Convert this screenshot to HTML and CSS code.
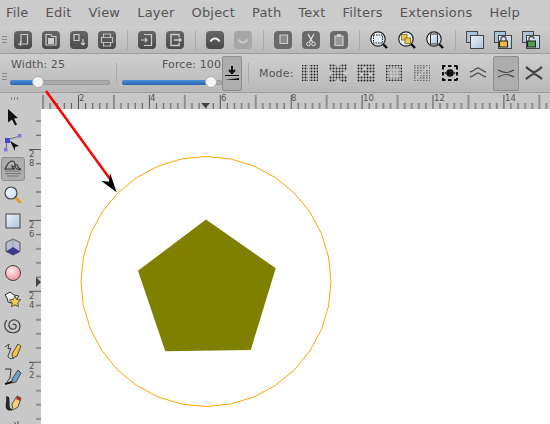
FILE: index.html
```html
<!DOCTYPE html>
<html lang="en">
<head>
    <meta charset="UTF-8">
    <title>Inkscape</title>
    <link rel="stylesheet" href="styles.css">
</head>
<body>
    <svg class="defs" width="0" height="0">
        <defs>
            <linearGradient id="btn" x1="0" y1="0" x2="0" y2="1">
                <stop offset="0" stop-color="#666"/>
                <stop offset="1" stop-color="#4a4a4a"/>
            </linearGradient>
            <linearGradient id="paper" x1="0" y1="0" x2="1" y2="1">
                <stop offset="0" stop-color="#eef3f8"/>
                <stop offset="1" stop-color="#a9c3dc"/>
            </linearGradient>
            <linearGradient id="lens" x1="0" y1="0" x2="1" y2="1">
                <stop offset="0" stop-color="#fff"/>
                <stop offset="1" stop-color="#c3d6e8"/>
            </linearGradient>
            <radialGradient id="ball" cx=".4" cy=".35" r=".7">
                <stop offset="0" stop-color="#fff0f2"/>
                <stop offset="1" stop-color="#f08a98"/>
            </radialGradient>
            <pattern id="dots" width="3" height="3" patternUnits="userSpaceOnUse">
                <circle cx="1.5" cy="1.5" r=".95" fill="#222"/>
            </pattern>
            <pattern id="fine" width="3" height="2.5" patternUnits="userSpaceOnUse">
                <rect x="1" y="1" width="1.6" height="1" fill="#444"/>
            </pattern>
            <pattern id="hticks" x="37" width="70.9" height="16" patternUnits="userSpaceOnUse">
                <path d="M.5 2V16M35.95 2V16M7.6 10V16M14.7 10V16M21.8 10V16M28.9 10V16M43 10V16M50.1 10V16M57.2 10V16M64.3 10V16" stroke="#555" fill="none"/>
            </pattern>
            <pattern id="vticks" y="40" width="12" height="70.9" patternUnits="userSpaceOnUse">
                <path d="M0 .5H12M7 14.7H12M7 28.9H12M7 43H12M7 57.2H12" stroke="#555" fill="none"/>
            </pattern>

            <symbol id="magnifier" viewBox="0 0 18 18">
                <path d="M12 12l5 5" stroke="#111" stroke-width="2.4"/>
                <circle cx="8" cy="8" r="7.2" fill="url(#lens)" stroke="#222" stroke-width="1.2"/>
            </symbol>
            <symbol id="panel" viewBox="0 0 18 18">
                <rect x=".5" y=".5" width="11" height="11" fill="#a8c3dc" stroke="#444"/>
                <rect x="4.5" y="4.5" width="13" height="13" fill="url(#paper)" stroke="#444"/>
            </symbol>
        </defs>
    </svg>

    <nav class="menubar">
        <span>File</span><span>Edit</span><span>View</span><span>Layer</span><span>Object</span><span>Path</span><span>Text</span><span>Filters</span><span>Extensions</span><span>Help</span>
    </nav>

    <div class="toolbar commands">
        <i class="grip"></i>
        <svg class="tool" viewBox="0 0 18 18"><rect width="18" height="18" rx="4" fill="url(#btn)"/><path d="M7 12V3.5h6.5V13H9M6.500 10v5M4 13h5" fill="none" stroke="#ccc" stroke-width="1.2"/></svg>
        <svg class="tool" viewBox="0 0 18 18"><rect width="18" height="18" rx="4" fill="url(#btn)"/><path d="M4 3.5h5l1 2h4V14H4z" fill="none" stroke="#ccc" stroke-width="1.2"/><rect x="6" y="7" width="6" height="6" fill="#ccc"/></svg>
        <svg class="tool" viewBox="0 0 18 18"><rect width="18" height="18" rx="4" fill="url(#btn)"/><path d="M4 3.5h5v6H4z" fill="none" stroke="#ccc" stroke-width="1.2"/><path d="M13 8v6M11 12l2 2 2-2" fill="none" stroke="#ccc" stroke-width="1.2"/></svg>
        <svg class="tool" viewBox="0 0 18 18"><rect width="18" height="18" rx="4" fill="url(#btn)"/><path d="M5.5 6V3h7v3M5.500 12v3h7v-3M3.500 6.500h11v5h-11z" fill="none" stroke="#bbb" stroke-width="1.2"/></svg>
        <i class="sep"></i>
        <svg class="tool" viewBox="0 0 18 18"><rect width="18" height="18" rx="4" fill="url(#btn)"/><path d="M6 3.5h7.5v11H6M3 9h6M7 7l2 2-2 2" fill="none" stroke="#ccc" stroke-width="1.2"/></svg>
        <svg class="tool" viewBox="0 0 18 18"><rect width="18" height="18" rx="4" fill="url(#btn)"/><path d="M13 6V3.5H5v11h8V12M8 9h7M13 7l2 2-2 2" fill="none" stroke="#ccc" stroke-width="1.4"/></svg>
        <i class="sep"></i>
        <svg class="tool" viewBox="0 0 18 18"><rect width="18" height="18" rx="4" fill="url(#btn)"/><path d="M4.5 10.500c2-4 7-4 9 0" fill="none" stroke="#eee" stroke-width="2"/></svg>
        <svg class="tool" viewBox="0 0 18 18"><rect width="18" height="18" rx="4" fill="#a6a6a6"/><path d="M4.5 8.500c2 4 7 4 9 0" fill="none" stroke="#c8c8c8" stroke-width="2"/></svg>
        <i class="sep"></i>
        <svg class="tool" viewBox="0 0 18 18"><rect width="18" height="18" rx="4" fill="#6a6a6a"/><path d="M6 4h7.500v8.500H6z" fill="#8a8a8a" stroke="#ccc" stroke-width="1.2"/></svg>
        <svg class="tool" viewBox="0 0 18 18"><rect width="18" height="18" rx="4" fill="#6a6a6a"/><path d="M6 3l4.500 8M12 3L7.500 11" stroke="#ddd" stroke-width="1.3"/><circle cx="6.500" cy="13" r="1.800" fill="none" stroke="#ddd"/><circle cx="11.500" cy="13" r="1.800" fill="none" stroke="#ddd"/></svg>
        <svg class="tool" viewBox="0 0 18 18"><rect width="18" height="18" rx="4" fill="#6a6a6a"/><path d="M5 5h8v9.500H5z" fill="#999" stroke="#ccc" stroke-width="1.2"/><rect x="7" y="3" width="4" height="3" fill="#ccc"/></svg>
        <i class="sep"></i>
        <svg class="tool" viewBox="0 0 18 18"><use href="#magnifier"/><rect x="3.500" y="4" width="9" height="8" fill="#e4ecf4" stroke="#222" stroke-dasharray="1.500 1"/></svg>
        <svg class="tool" viewBox="0 0 18 18"><use href="#magnifier"/><rect x="3.500" y="3.500" width="5.500" height="5.500" fill="#f2c84b" stroke="#7a6a22" stroke-width=".8"/><rect x="7" y="7" width="5.500" height="5.500" fill="#f2c84b" stroke="#7a6a22" stroke-width=".8"/></svg>
        <svg class="tool" viewBox="0 0 18 18"><use href="#magnifier"/><rect x="4.500" y="3" width="7" height="10" fill="url(#paper)" stroke="#333"/></svg>
        <i class="sep"></i>
        <svg class="tool" viewBox="0 0 18 18"><use href="#panel"/></svg>
        <svg class="tool" viewBox="0 0 18 18"><use href="#panel"/><path d="M7 10V8a2.500 2.500 0 0 1 5 0v2" fill="none" stroke="#555" stroke-width="1.3"/><rect x="5.500" y="10" width="8" height="6" fill="#f0b92e" stroke="#222"/></svg>
        <svg class="tool" viewBox="0 0 18 18"><use href="#panel"/><path d="M7 10V8a2.500 2.500 0 0 1 5 0" fill="none" stroke="#555" stroke-width="1.3"/><rect x="5.500" y="10" width="8" height="6" fill="#49a049" stroke="#222"/></svg>
    </div>

    <div class="toolbar controls">
        <i class="grip"></i>
        <label class="slider width-slider">
            <span class="slider-label">Width: 25</span>
            <span class="track"><span class="fill fill-width"></span><span class="thumb"></span></span>
        </label>
        <i class="sep"></i>
        <label class="slider force-slider">
            <span class="slider-label">Force: 100</span>
            <span class="track"><span class="fill fill-force"></span><span class="thumb"></span></span>
        </label>
        <button class="toggle pressure">
            <svg width="16" height="16" viewBox="0 0 16 16"><path d="M8 1v6M5 5l3 3 3-3" fill="none" stroke="#111" stroke-width="2"/><path d="M1 10h14v1H1zM1 15l14-2v2z" fill="#111"/></svg>
        </button>
        <i class="sep"></i>
        <span class="mode-label">Mode:</span>
        <div class="modes">
            <span class="mode"><svg width="18" height="18" viewBox="0 0 18 18"><rect x="1" y="1" width="16" height="16" fill="url(#dots)"/><rect x="7" y="1" width="1" height="16" fill="#ccc"/></svg></span>
            <span class="mode"><svg width="18" height="18" viewBox="0 0 18 18"><rect width="18" height="18" fill="url(#dots)"/><path d="M0 6l5 3-5 3zM18 6l-5 3 5 3zM6 0l3 4 3-4zM6 18l3-4 3 4z" fill="#c8c8c8"/></svg></span>
            <span class="mode"><svg width="18" height="18" viewBox="0 0 18 18"><rect width="18" height="18" fill="url(#dots)"/><path d="M6 3h3v3H6zM12 9h3v3h-3zM3 9h3v3H3z" fill="#c8c8c8"/></svg></span>
            <span class="mode"><svg width="18" height="18" viewBox="0 0 18 18"><rect x="1" y="1" width="16" height="16" fill="url(#dots)"/><rect x="4" y="4" width="10" height="10" fill="#c8c8c8" opacity=".75"/></svg></span>
            <span class="mode"><svg width="18" height="18" viewBox="0 0 18 18"><rect x="1" y="1" width="16" height="16" fill="url(#fine)"/><path d="M3 15L15 3" stroke="#c8c8c8" stroke-width="1.5"/></svg></span>
            <span class="mode"><svg width="18" height="18" viewBox="0 0 18 18"><path d="M1 2h16M1 16h16M2 2v14M16 2v14" fill="none" stroke="#111" stroke-width="2" stroke-dasharray="3.500 2.500"/><circle cx="9" cy="9" r="3.800" fill="#111"/><circle cx="4.500" cy="9" r="1" fill="#333"/><circle cx="13.500" cy="9" r="1" fill="#333"/></svg></span>
            <span class="mode"><svg width="18" height="18" viewBox="0 0 18 18"><path d="M1 8c4-1 6-4 8-4s4 3 8 4M1 13c4-1 6-4 8-4s4 3 8 4" fill="none" stroke="#555" stroke-width="1.4"/></svg></span>
            <span class="mode active"><svg width="18" height="18" viewBox="0 0 18 18"><path d="M1 6c4 2 6 2.500 8 2.500S13 8 17 6M1 13c4-2 6-2.500 8-2.500s4 .5 8 2.500" fill="none" stroke="#444" stroke-width="1.2"/></svg></span>
            <span class="mode"><svg width="18" height="18" viewBox="0 0 18 18"><path d="M1 3c4 3 6 5 8 5s4-2 8-5M1 15c4-3 6-5 8-5s4 2 8 5" fill="none" stroke="#444" stroke-width="2.2"/></svg></span>
        </div>
    </div>

    <main class="main">
        <aside class="toolbox">
            <i class="grip-h"></i>
            <svg class="tool-v" viewBox="0 0 18 18"><path d="M4 1l10 9-4 .5 3 6-2 1-3-6-4 3z" fill="#111"/></svg>
            <svg class="tool-v" viewBox="0 0 18 18"><path d="M3 6L16 2M3 6L2 15" stroke="#667" fill="none"/><rect x="1" y="4" width="5" height="5" fill="#4a4ad0"/><rect x="14" y="0" width="3.500" height="3.500" fill="#7a7ae0"/><rect x="0" y="14" width="3.500" height="3.500" fill="#7a7ae0"/><path d="M6 7l9 5-4 1 0 4z" fill="#111"/></svg>
            <span class="tool-active"><svg class="tool-v" viewBox="0 0 18 18"><path d="M1 9c2-3 3-8 7-8 2 0 3 2 3 4 1-1 3 0 3 2 1 2 2 2 3 2-4 2-6-2-6-3-1 1-2 1-3 0 0 2 1 3 3 3H1z" fill="none" stroke="#333" stroke-width="1.1"/><path d="M1 11h16M1 13.500h16M3 16h12" stroke="#777" stroke-width="1"/></svg></span>
            <svg class="tool-v" viewBox="0 0 18 18"><path d="M11 11l6 6" stroke="#d9a020" stroke-width="3"/><circle cx="7" cy="7" r="6" fill="url(#lens)" stroke="#444" stroke-width="1.2"/></svg>
            <svg class="tool-v" viewBox="0 0 18 18"><rect x="2" y="2" width="14" height="14" fill="url(#paper)" stroke="#444"/></svg>
            <svg class="tool-v" viewBox="0 0 18 18"><path d="M9 1l7 3.500v9L9 17l-7-3.500v-9z" fill="#b8bcd8" stroke="#555"/><path d="M9 9l7 4.500L9 17l-7-3.500z" fill="#3c3a8c"/><path d="M9 1v8" stroke="#999"/></svg>
            <svg class="tool-v" viewBox="0 0 18 18"><circle cx="9" cy="9" r="7.500" fill="url(#ball)" stroke="#444"/></svg>
            <svg class="tool-v" viewBox="0 0 18 18"><path d="M1 5l5-3 4 3 5 1-3 4 1 5-5-2-4-1-1-4z" fill="#eee" stroke="#333"/><path d="M11 6l1.700 3.500 4 .5-3 2.700.8 4-3.500-2-3.500 2 .8-4-3-2.700 4-.5z" fill="#f6d14c" stroke="#333" stroke-width=".8"/></svg>
            <svg class="tool-v" viewBox="0 0 18 18"><path d="M9 9c1-2 4 0 3 2.500S6 14 5 10s3-7 6.500-6 5.500 5 4 9-8 5-12 2S.5 6 3 4" fill="none" stroke="#444" stroke-width="1.2"/></svg>
            <svg class="tool-v" viewBox="0 0 18 18"><path d="M1 5l4-3-1 5 3-1-3 8c0 3 4 3 6 2" fill="none" stroke="#444"/><path d="M8 12l6-10 3 2-4 10-4 2z" fill="#f4c242" stroke="#333" stroke-width=".8"/></svg>
            <svg class="tool-v" viewBox="0 0 18 18"><path d="M1 1h6l-1 9-3 4" fill="none" stroke="#333"/><path d="M8 11l6-9 3 3-5 9-4 1z" fill="#6ea0c8" stroke="#333" stroke-width=".8"/><path d="M1 16l7-2" stroke="#111" stroke-width="2"/></svg>
            <svg class="tool-v" viewBox="0 0 18 18"><path d="M2 2c1 5-1 9 0 12 1 3 5 3 7 2l-3-2c-1-3 0-7-1-11z" fill="#222"/><path d="M8 10l5-8 4 2-3 9-5 3z" fill="#f4d27a" stroke="#333" stroke-width=".8"/><path d="M13 2l4 2-1 3-4-2z" fill="#b03030"/></svg>
            <svg class="tool-v" viewBox="0 0 18 18"><path d="M1 8l6-4v10H1zM10 2l2 2M14 1v3" stroke="#555" fill="#444"/></svg>
        </aside>

        <div class="workspace">
            <div class="corner"></div>
            <svg class="hruler" width="509" height="16">
                <rect width="509" height="16" fill="url(#hticks)"/>
                <text x="38" y="8">2</text><text x="109" y="8">4</text><text x="180" y="8">6</text><text x="250" y="8">8</text><text x="322" y="8">10</text><text x="393" y="8">12</text><text x="464" y="8">14</text>
                <path class="marker" d="M160 10h9l-4.500 5z"/>
            </svg>
            <svg class="vruler" width="12" height="315">
                <rect width="12" height="315" fill="url(#vticks)"/>
                <text x="0" y="48">2</text><text x="0" y="57">8</text>
                <text x="0" y="119">2</text><text x="0" y="128">6</text>
                <text x="0" y="190">2</text><text x="0" y="199">4</text>
                <text x="0" y="260">2</text><text x="0" y="269">2</text>
                <path class="marker" d="M7 168l5 5-5 5z"/>
            </svg>
            <div class="canvas"></div>
        </div>
    </main>

    <svg class="drawing" width="550" height="424" viewBox="0 0 550 424">
        <polygon transform="translate(206 281.5)" fill="none" stroke="#ffa500" points="0,-125 24.4,-122.6 47.8,-115.5 69.4,-103.9 88.4,-88.4 103.9,-69.4 115.5,-47.8 122.6,-24.4 125,0 122.6,24.4 115.5,47.8 103.9,69.4 88.4,88.4 69.4,103.9 47.8,115.5 24.4,122.6 0,125 -24.4,122.6 -47.8,115.5 -69.4,103.9 -88.4,88.4 -103.9,69.4 -115.5,47.8 -122.6,24.4 -125,0 -122.6,-24.4 -115.5,-47.8 -103.9,-69.4 -88.4,-88.4 -69.4,-103.9 -47.8,-115.5 -24.4,-122.6"/>
        <polygon fill="#808000" points="206,219.5 275.7,268.3 250.7,350 165.3,351.3 138,270.7"/>
        <path d="M46 91L110 179" stroke="#f00" stroke-width="2.5" fill="none"/>
        <path d="M116.7 192.3L101 180.7 109 181.7 110 173z" fill="#000"/>
    </svg>
</body>
</html>
```

FILE: styles.css
```css
* {
    box-sizing: border-box;
}
html, body {
    margin: 0;
    height: 424px;
    overflow: hidden;
}
body {
    position: relative;
    display: flex;
    flex-direction: column;
    background-color: #c8c8c8;
    color: #555;
    font-family: "DejaVu Sans", sans-serif;
}
.defs {
    position: absolute;
}
.menubar {
    display: flex;
    gap: 17px;
    height: 26px;
    padding: 5px 0 0 6px;
    font-size: 13px;
    letter-spacing: .2px;
    line-height: 16px;
    color: #555;
    background-color: #cbcbcb;
}
.toolbar {
    display: flex;
    align-items: center;
    flex-shrink: 0;
    background: linear-gradient(#cecece, #b9b9b9);
    border-bottom: 1px solid #9c9c9c;
}
.commands {
    height: 28px;
    padding-right: 5px;
}
.controls {
    height: 39px;
}
.grip {
    width: 5px;
    height: 8px;
    margin: 0 2px;
    background: repeating-linear-gradient(#888 0 1px, transparent 1px 3px);
}
.commands .tool {
    width: 18px;
    height: 18px;
    margin: 0 5px;
    filter: blur(.3px);
}
.sep {
    width: 1px;
    height: 20px;
    background-color: #aaa;
    margin: 0 5.5px;
}
.controls .grip {
    margin-top: 8px;
}
.slider {
    display: flex;
    flex-direction: column;
    width: 100px;
    padding-bottom: 3.5px;
}
.slider-label {
    font-size: 11px;
    letter-spacing: .1px;
    line-height: 13px;
    height: 21.5px;
}
.force-slider .slider-label {
    padding-right: 1px;
    text-align: right;
}
.width-slider {
    margin-left: 1px;
}
.width-slider .slider-label {
    padding-left: 1px;
}
.track {
    position: relative;
    display: block;
    height: 5px;
    border-radius: 3px;
    background-color: #aaa;
    box-shadow: inset 0 0 0 1px #989898;
}
.fill {
    display: block;
    height: 5px;
    border-radius: 3px;
    background: linear-gradient(#4a90d9, #2a62b0);
}
.fill-width {
    width: 28px;
}
.fill-force {
    width: 89px;
}
.thumb {
    position: absolute;
    top: -3.5px;
    width: 12px;
    height: 12px;
    border-radius: 50%;
    background-color: #f4f4f4;
    border: 1px solid #aaa;
}
.width-slider .thumb {
    left: 22px;
}
.force-slider .thumb {
    left: 83px;
}
.toggle {
    display: flex;
    align-items: center;
    justify-content: center;
    width: 20px;
    height: 35px;
    padding: 0;
    border: 1px solid #8e8e8e;
    border-radius: 2px;
    background-color: #adadad;
}
.mode-label {
    width: 37px;
    margin-left: 5px;
    font-size: 11px;
    letter-spacing: .2px;
}
.modes {
    display: flex;
    align-items: center;
}
.mode {
    display: flex;
    align-items: center;
    justify-content: center;
    width: 28px;
    height: 35px;
}
.mode svg {
    filter: blur(.3px);
}
.mode.active {
    width: 26px;
    margin: 0 1px;
    border: 1px solid #8e8e8e;
    border-radius: 2px;
    background-color: #adadad;
}
.main {
    display: flex;
    flex: 1;
    min-height: 0;
}
.toolbox {
    display: flex;
    flex-direction: column;
    align-items: center;
    flex-shrink: 0;
    width: 29px;
    padding: 4px 3px 0 0;
    overflow: hidden;
    background-color: #c8c8c8;
}
.grip-h {
    flex-shrink: 0;
    width: 8px;
    height: 3px;
    margin: 0 0 4px 3px;
    background: repeating-linear-gradient(90deg, #888 0 1px, transparent 1px 3px);
}
.tool-v {
    flex-shrink: 0;
    width: 18px;
    height: 18px;
    margin: 4px 0;
    filter: blur(.3px);
}
.tool-active {
    display: flex;
    align-items: center;
    justify-content: center;
    flex-shrink: 0;
    width: 24px;
    height: 24px;
    margin: 1px 0;
    border: 1px solid #8e8e8e;
    border-radius: 3px;
    background-color: #adadad;
}
.workspace {
    flex: 1;
    display: grid;
    grid-template-columns: 12px 1fr;
    grid-template-rows: 16px 1fr;
}
.corner {
    background-color: #c8c8c8;
}
.hruler, .vruler {
    display: block;
}
.hruler text, .vruler text {
    font-size: 8.5px;
    fill: #555;
    font-family: "DejaVu Sans", sans-serif;
}
.marker {
    fill: #444;
}
.canvas {
    background-color: #fff;
}
.drawing {
    position: absolute;
    top: 0;
    left: 0;
    pointer-events: none;
}
```
